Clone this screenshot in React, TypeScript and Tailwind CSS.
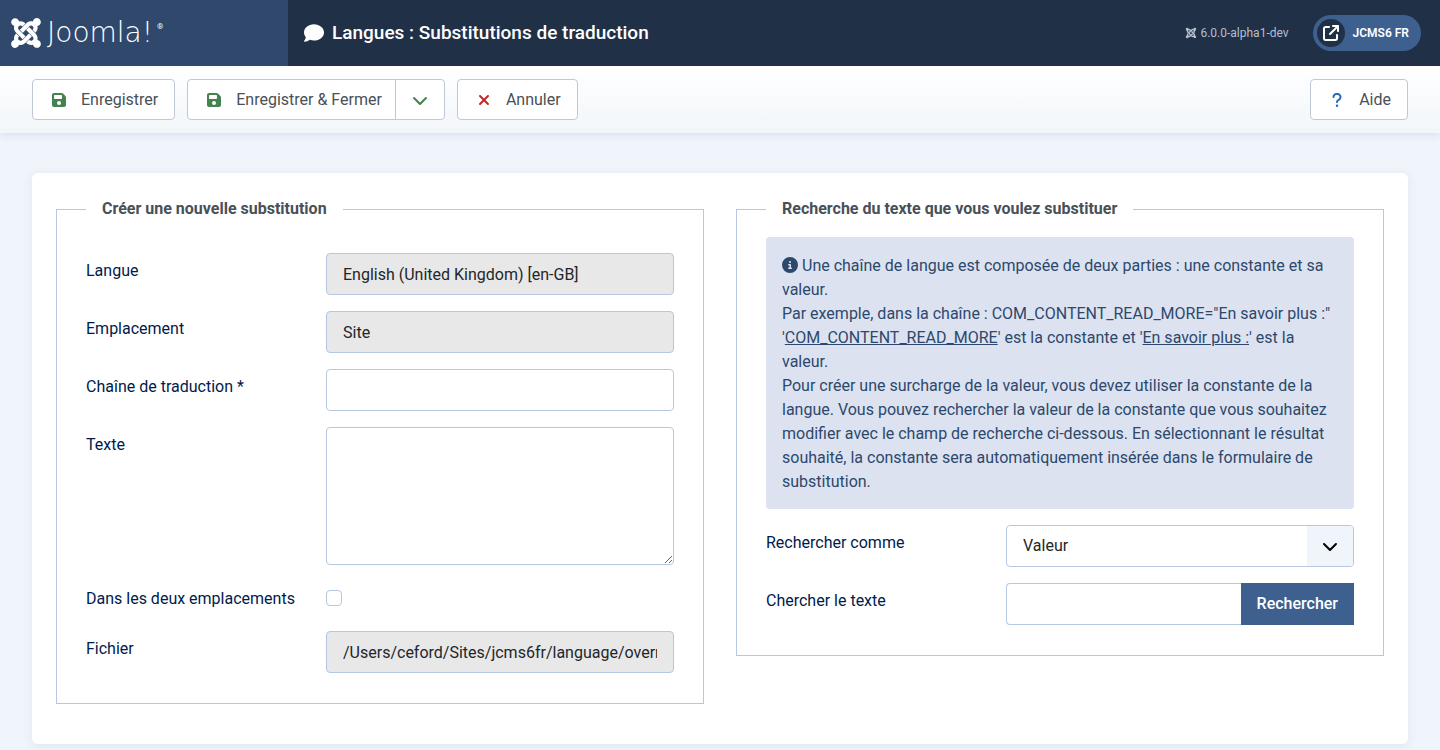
import type { ReactNode } from "react";
import {
  FaArrowUpRightFromSquare,
  FaChevronDown,
  FaCircleInfo,
  FaComment,
  FaFloppyDisk,
  FaJoomla,
  FaQuestion,
  FaXmark,
} from "react-icons/fa6";

const control =
  "block h-[42px] w-full rounded border border-[#b6c7e1] px-4 text-[#22262a] outline-none";
const toolbarButton =
  "flex h-[41px] items-center gap-3 rounded border border-[#c0c8d8] bg-white px-4 text-[#495057]";

function IconSlot({ children }: { children: ReactNode }) {
  return <span className="flex w-5 justify-center">{children}</span>;
}

function Header() {
  return (
    <header className="relative z-10 flex h-[66px] items-stretch bg-[#203047] text-white">
      <a href="#accueil" aria-label="Joomla!" className="flex w-72 shrink-0 items-center gap-1 bg-[#2f486b] pl-[9px]">
        <FaJoomla className="size-[34px]" />
        <span className="flex items-start gap-1">
          <span className="font-['DejaVu_Sans_Light','DejaVu_Sans_ExtraLight','DejaVu_Sans',sans-serif] text-[28px] leading-8 font-extralight">
            Joomla!
          </span>
          <span className="pt-1 text-[8px] leading-3">®</span>
        </span>
      </a>
      <div className="flex flex-1 items-center gap-2 pr-[19px] pl-4">
        <FaComment className="size-5" />
        <h1 className="text-[19px] leading-6 font-medium">Langues : Substitutions de traduction</h1>
        <div className="ml-auto flex items-center gap-[3px] text-xs text-[#b5bfcd]">
          <FaJoomla className="size-3" />
          <span>6.0.0-alpha1-dev</span>
        </div>
        <a href="#site" className="ml-4 flex h-9 items-center gap-2 rounded-full bg-[#3d608f] pr-3 pl-1 text-xs font-semibold">
          <span className="flex size-7 items-center justify-center rounded-full bg-[#203047]">
            <FaArrowUpRightFromSquare className="size-4" />
          </span>
          JCMS6 FR
        </a>
      </div>
    </header>
  );
}

function Toolbar() {
  return (
    <div className="relative flex items-start gap-3 bg-gradient-to-b from-white to-[#f2f6fa] px-8 py-[13px] shadow-[0_2px_8px_#d5e0ee]">
      <button type="button" className={toolbarButton}>
        <IconSlot>
          <FaFloppyDisk className="size-4 text-[#448350]" />
        </IconSlot>
        Enregistrer
      </button>
      <div className="flex h-[41px] rounded border border-[#c0c8d8] bg-white text-[#495057]">
        <button type="button" className="flex items-center gap-3 pr-[13px] pl-4">
          <IconSlot>
            <FaFloppyDisk className="size-4 text-[#448350]" />
          </IconSlot>
          Enregistrer &amp; Fermer
        </button>
        <button
          type="button"
          aria-label="Autres actions"
          className="flex w-[49px] items-center justify-center border-l border-[#c0c8d8]"
        >
          <FaChevronDown className="size-4 text-[#448350]" />
        </button>
      </div>
      <button type="button" className={toolbarButton}>
        <IconSlot>
          <FaXmark className="size-4 text-[#c52827]" />
        </IconSlot>
        Annuler
      </button>
      <button type="button" className={`${toolbarButton} ml-auto`}>
        <IconSlot>
          <FaQuestion className="size-4 text-[#2a69b8]" />
        </IconSlot>
        Aide
      </button>
    </div>
  );
}

function Row({ id, label, children }: { id: string; label: string; children: ReactNode }) {
  return (
    <div className="flex items-start">
      <label htmlFor={id} className="w-60 shrink-0 pt-[6px] pb-1 text-[#001b4c]">
        {label}
      </label>
      <div className="min-w-0 flex-1">{children}</div>
    </div>
  );
}

function Panel({ title, children }: { title: string; children: ReactNode }) {
  return (
    <fieldset className="min-w-0 border border-[#b6c7e1] px-[29px] pb-[30px]">
      <legend className="px-4 font-bold text-[#495057]">{title}</legend>
      {children}
    </fieldset>
  );
}

function OverrideForm() {
  return (
    <Panel title="Créer une nouvelle substitution">
      <div className="flex flex-col gap-4 pt-8">
        <Row id="langue" label="Langue">
          <input id="langue" readOnly value="English (United Kingdom) [en-GB]" className={`${control} bg-[#e8e8e8]`} />
        </Row>
        <Row id="emplacement" label="Emplacement">
          <input id="emplacement" readOnly value="Site" className={`${control} bg-[#e8e8e8]`} />
        </Row>
        <Row id="constante" label="Chaîne de traduction *">
          <input id="constante" required className={`${control} bg-white`} />
        </Row>
        <Row id="texte" label="Texte">
          <textarea
            id="texte"
            className="block h-[138px] w-full resize-y rounded border border-[#b6c7e1] bg-white px-4 py-2 text-[#22262a] outline-none"
          />
        </Row>
        <Row id="deux" label="Dans les deux emplacements">
          <div className="flex h-[34px] items-center">
            <input id="deux" type="checkbox" className="size-4 appearance-none rounded border border-[#b6c7e1] bg-white checked:bg-[#3d608f]" />
          </div>
        </Row>
        <Row id="fichier" label="Fichier">
          <input
            id="fichier"
            readOnly
            value="/Users/ceford/Sites/jcms6fr/language/overrides/en-GB.override.ini"
            className={`${control} bg-[#e8e8e8]`}
          />
        </Row>
      </div>
    </Panel>
  );
}

function SearchForm() {
  return (
    <Panel title="Recherche du texte que vous voulez substituer">
      <div className="flex flex-col gap-4 pt-4">
        <div className="rounded bg-[#dce2ef] px-4 pt-[17px] pb-[15px] text-[#2d486d]">
          <p>
            <FaCircleInfo className="mr-1 inline-block size-4 align-[-2px]" />
            Une chaîne de langue est composée de deux parties : une constante et sa valeur.
          </p>
          <p>
            Par exemple, dans la chaîne : COM_CONTENT_READ_MORE="En savoir plus :" '
            <span className="underline">COM_CONTENT_READ_MORE</span>' est la constante et '
            <span className="underline">En savoir plus :</span>' est la valeur.
          </p>
          <p>
            Pour créer une surcharge de la valeur, vous devez utiliser la constante de la langue. Vous pouvez
            rechercher la valeur de la constante que vous souhaitez modifier avec le champ de recherche ci-dessous.
            En sélectionnant le résultat souhaité, la constante sera automatiquement insérée dans le formulaire de
            substitution.
          </p>
        </div>
        <Row id="comme" label="Rechercher comme">
          <div className="relative">
            <select id="comme" className={`${control} appearance-none bg-white`}>
              <option>Valeur</option>
              <option>Constante</option>
            </select>
            <span className="pointer-events-none absolute inset-y-px right-px flex w-[46px] items-center justify-center rounded-r-[3px] bg-[#f0f4fb]">
              <FaChevronDown className="size-4 text-black" />
            </span>
          </div>
        </Row>
        <Row id="chercher" label="Chercher le texte">
          <div className="flex">
            <input
              id="chercher"
              className="h-[42px] min-w-0 flex-1 rounded-l border border-r-0 border-[#b6c7e1] bg-white px-4 outline-none"
            />
            <button type="button" className="h-[42px] bg-[#3d608f] px-4 font-medium text-white">
              Rechercher
            </button>
          </div>
        </Row>
      </div>
    </Panel>
  );
}

export default function App() {
  return (
    <div className="min-h-screen bg-[#f0f4fb] font-[Roboto,sans-serif] text-base">
      <Header />
      <Toolbar />
      <main className="px-8 pt-10 pb-1.5">
        <div className="grid grid-cols-2 items-start gap-8 rounded-md bg-white px-6 pt-6 pb-10 shadow-[0_2px_8px_#dde6f2]">
          <OverrideForm />
          <SearchForm />
        </div>
      </main>
    </div>
  );
}
